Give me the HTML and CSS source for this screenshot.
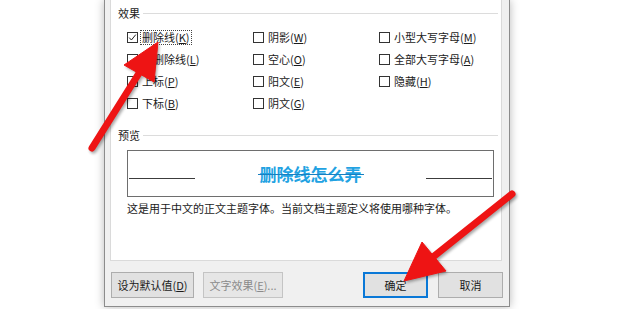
FILE: index.html
```html
<!DOCTYPE html>
<html lang="zh-CN">
<head>
<meta charset="utf-8">
<title>字体 - 效果</title>
<link rel="stylesheet" href="styles.css">
</head>
<body>
<div class="stage">
  <div class="dialog">
    <div class="panel">
      <div class="sect-title"><span>效果</span><i class="rule"></i></div>
      <div class="effects">
        <div class="opt"><span class="box"><svg width="9" height="9" viewBox="0 0 9 9"><polyline points="1.2,4.6 3.4,7 7.8,1.6" fill="none" stroke="#222" stroke-width="1"/></svg></span><span class="lbl focus">删除线(<u>K</u>)</span></div>
        <div class="opt"><span class="box"></span><span class="lbl">阴影(<u>W</u>)</span></div>
        <div class="opt"><span class="box"></span><span class="lbl">小型大写字母(<u>M</u>)</span></div>
        <div class="opt"><span class="box"></span><span class="lbl">双删除线(<u>L</u>)</span></div>
        <div class="opt"><span class="box"></span><span class="lbl">空心(<u>O</u>)</span></div>
        <div class="opt"><span class="box"></span><span class="lbl">全部大写字母(<u>A</u>)</span></div>
        <div class="opt"><span class="box"></span><span class="lbl">上标(<u>P</u>)</span></div>
        <div class="opt"><span class="box"></span><span class="lbl">阳文(<u>E</u>)</span></div>
        <div class="opt"><span class="box"></span><span class="lbl">隐藏(<u>H</u>)</span></div>
        <div class="opt"><span class="box"></span><span class="lbl">下标(<u>B</u>)</span></div>
        <div class="opt"><span class="box"></span><span class="lbl">阴文(<u>G</u>)</span></div>
      </div>
      <div class="sect-title second"><span>预览</span><i class="rule"></i></div>
      <div class="preview">
        <i class="pline"></i>
        <span class="sample">删除线怎么弄</span>
        <i class="pline"></i>
      </div>
      <p class="desc">这是用于中文的正文主题字体。当前文档主题定义将使用哪种字体。</p>
    </div>
    <div class="buttons">
      <button class="btn w83">设为默认值(<u>D</u>)</button>
      <button class="btn w80 disabled">文字效果(<u>E</u>)...</button>
      <button class="btn w65 primary">确定</button>
      <button class="btn w65">取消</button>
    </div>
  </div>
  <svg class="arrows" width="620" height="309" viewBox="0 0 620 309">
    <defs>
      <filter id="sh" x="-20%" y="-20%" width="140%" height="140%">
        <feGaussianBlur stdDeviation="1.6"/>
      </filter>
    </defs>
    <g opacity="0.35" filter="url(#sh)" transform="translate(1.5,2)">
      <line x1="92" y1="148" x2="141" y2="70" stroke="#000" stroke-width="7" stroke-linecap="round"/>
      <polygon points="158,42 124,65 154,82" fill="#000"/>
      <line x1="512" y1="194" x2="433" y2="257" stroke="#000" stroke-width="7" stroke-linecap="round"/>
      <polygon points="404,281 422,242 446,271" fill="#000"/>
    </g>
    <g fill="#ee1414" stroke="#ee1414">
      <line x1="92" y1="148" x2="141" y2="70" stroke-width="7" stroke-linecap="round"/>
      <polygon points="158,42 124,65 154,82" stroke-width="1" stroke-linejoin="round"/>
      <line x1="512" y1="194" x2="433" y2="257" stroke-width="7" stroke-linecap="round"/>
      <polygon points="404,281 422,242 446,271" stroke-width="1" stroke-linejoin="round"/>
    </g>
  </svg>
</div>
</body>
</html>
```

FILE: styles.css
```css
* { box-sizing: border-box; }
html, body { margin: 0; padding: 0; background: #fff; }
body {
  width: 620px;
  height: 309px;
  overflow: hidden;
  font-family: "Noto Sans CJK SC", "Microsoft YaHei", sans-serif;
  font-size: 11px;
  color: #1a1a1a;
}
.stage {
  position: relative;
  width: 620px;
  height: 309px;
  overflow: hidden;
}
.dialog {
  margin-left: 104px;
  width: 406px;
  height: 307px;
  background: #f0f0f0;
  border: 1px solid #8c8c8c;
  border-top: none;
  box-shadow: 0 0 9px rgba(0, 0, 0, 0.28);
  display: flex;
  flex-direction: column;
}
.panel {
  margin-left: 5px;
  width: 392px;
  height: 261px;
  background: #fff;
  border: 1px solid #dadada;
  border-top: none;
  padding: 0 3px 0 7px;
  display: flex;
  flex-direction: column;
}
.sect-title {
  display: flex;
  align-items: center;
  height: 26px;
  line-height: 14px;
}
.sect-title.second {
  height: 20px;
  margin-top: 11px;
}
.rule {
  flex: 1;
  height: 1px;
  background: #dcdcdc;
  margin-left: 3px;
}
.effects {
  margin-left: 9px;
  display: grid;
  grid-template-columns: 126px 126px 1fr;
  grid-auto-rows: 22px;
}
.opt {
  display: flex;
  align-items: center;
  line-height: 13px;
}
.box {
  width: 11px;
  height: 11px;
  border: 1px solid #333;
  background: #fff;
  display: flex;
  align-items: center;
  justify-content: center;
  flex: none;
}
.box svg { display: block; }
.lbl {
  margin-left: 4px;
  white-space: nowrap;
}
.lbl.focus {
  margin-left: 2px;
  padding: 0 1px;
  border: 1px dotted #444;
  line-height: 13px;
}
u { text-decoration: underline; text-underline-offset: 1px; }
.preview {
  margin: 5px 4px 0 9px;
  height: 47px;
  border: 1px solid #6e6e6e;
  display: flex;
  align-items: center;
  justify-content: space-between;
  padding: 0 1px;
}
.pline {
  align-self: flex-start;
  width: 66px;
  height: 1px;
  margin-top: 27px;
  background: #3c3c3c;
}
.sample {
  position: relative;
  display: inline-block;
  font-size: 17px;
  font-weight: 700;
  line-height: 22px;
  color: #22a2e2;
}
.sample::after {
  content: "";
  position: absolute;
  left: -2px;
  right: -2px;
  top: 11px;
  height: 1px;
  background: #177fc0;
}
.desc {
  margin: 3px 0 0 9px;
  line-height: 16px;
  white-space: nowrap;
}
.buttons {
  display: flex;
  margin-top: 11px;
  padding: 0 6px;
  gap: 9px;
}
.btn {
  height: 26px;
  padding: 0;
  font-family: inherit;
  font-size: 11px;
  color: #1a1a1a;
  background: #e1e1e1;
  border: 1px solid #adadad;
  line-height: 14px;
}
.w83 { width: 83px; }
.w80 { width: 80px; }
.w65 { width: 65px; }
.btn.disabled {
  color: #8a8a8a;
  background: #e6e6e6;
  border-color: #c4c4c4;
}
.btn.primary {
  margin-left: auto;
  border: 2px solid #0a78d7;
  margin-right: 1px;
}
.arrows {
  position: absolute;
  left: 0;
  top: 0;
  pointer-events: none;
}
```
